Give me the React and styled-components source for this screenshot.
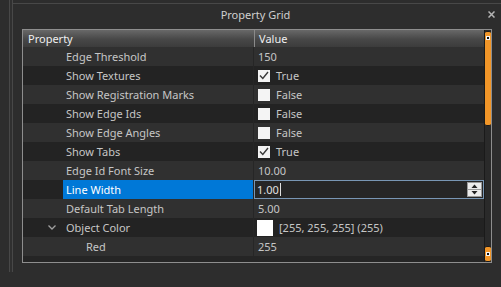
import React from 'react';
import styled, {createGlobalStyle} from 'styled-components';

const Global = createGlobalStyle`
    body {
        margin: 0;
        background: #2d2d2d;
        font-family: "Noto Sans", "Open Sans", sans-serif;
    }
`;

const Page = styled.div`
    width: 501px;
    height: 287px;
    display: flex;
    background: #2d2d2d;
    overflow: hidden;
`;

const Rail = styled.div`
    margin-left: 9px;
    width: 2px;
    height: 272px;
    border-left: 1px solid #484848;
    border-right: 1px solid #484848;
    background: #303030;
`;

const Main = styled.div`
    flex: 1;
    margin-top: 3px;
    border-top: 1px solid #484848;
    display: flex;
    flex-direction: column;
`;

const TitleBar = styled.div`
    height: 20px;
    display: grid;
    grid-template-columns: 1fr auto 1fr;
    align-items: center;
    font-size: 11px;
    color: #cfcfcf;
`;

const Title = styled.span`
    grid-column: 2;
    margin-right: 3px;
`;

const Close = styled.div`
    justify-self: end;
    margin-right: 6px;
    display: flex;
`;

const Grid = styled.div`
    margin: 5px 0 0 9px;
    width: 470px;
    height: 234px;
    box-sizing: border-box;
    border: 1px solid #8e8e8e;
    display: grid;
    grid-template-columns: 461px 7px;
    background: #252525;
`;

const Table = styled.div`
    display: flex;
    flex-direction: column;
    font-size: 11px;
`;

const Header = styled.div`
    height: 17px;
    display: grid;
    grid-template-columns: 231px 230px;
    background: linear-gradient(#686868, #474747 55%, #3c3c3c);
    color: #f0f0f0;
`;

const HeadCell = styled.div`
    display: flex;
    align-items: center;
    padding-left: ${p => p.$pad}px;
    border-left: ${p => p.$divider ? '1px solid #8a8a8a' : 'none'};
`;

const Row = styled.div`
    height: 19px;
    display: grid;
    grid-template-columns: 40px 191px 230px;
    background: ${p => p.$odd ? '#232323' : '#303030'};
    color: #c6c6c6;
`;

const Gutter = styled.div`
    display: flex;
    align-items: center;
    justify-content: flex-end;
    padding-right: 7px;
`;

const NameCell = styled.div`
    display: flex;
    align-items: center;
    padding-left: ${p => 3 + p.$level * 20}px;
    background: ${p => p.$selected ? '#0078d7' : 'transparent'};
    color: ${p => p.$selected ? '#ffffff' : 'inherit'};
    border-right: 1px solid #262626;
    white-space: nowrap;
`;

const ValueCell = styled.div`
    display: flex;
    align-items: center;
    gap: 6px;
    padding-left: 4px;
`;

const CheckBox = styled.div`
    width: 12px;
    height: 12px;
    background: #f4f4f4;
    display: flex;
    align-items: center;
    justify-content: center;
`;

const Swatch = styled.div`
    width: 16px;
    height: 16px;
    margin-left: -1px;
    background: #ffffff;
`;

const Editor = styled.div`
    display: flex;
    align-items: center;
    box-sizing: border-box;
    height: 19px;
    border: 1px solid #7896b4;
    background: #262626;
    padding-left: 2px;
    color: #e0e0e0;
`;

const Caret = styled.span`
    width: 1px;
    height: 13px;
    background: #e0e0e0;
    margin-left: 1px;
`;

const Spin = styled.div`
    margin-left: auto;
    margin-right: 1px;
    width: 15px;
    height: 15px;
    background: #ececec;
    border: 1px solid #9a9a9a;
    box-sizing: border-box;
    display: flex;
    flex-direction: column;
`;

const SpinHalf = styled.div`
    flex: 1;
    display: flex;
    align-items: center;
    justify-content: center;
    border-top: ${p => p.$split ? '1px solid #9a9a9a' : 'none'};
`;

const Scroll = styled.div`
    box-sizing: border-box;
    border-left: 1px solid #1a1a1a;
    background-color: #2a2a2a;
    display: grid;
    grid-template-rows: 95px 1fr 16px;
    padding-top: 1px;
`;

const Thumb = styled.div`
    grid-row: ${p => p.$row};
    background-color: #f29628;
    border-top: 1px solid #1a1a1a;
    border-bottom: 1px solid #1a1a1a;
    border-radius: 2px;
    display: flex;
    justify-content: center;
    align-items: flex-start;
    padding-top: ${p => p.$dot}px;
`;

const Dot = styled.div`
    width: 2px;
    height: 2px;
    background-color: #111;
    box-shadow: 0 0 0 1px #f6f6f6;
`;

const Check = () => (
    <svg width="10" height="9" viewBox="0 0 10 9">
        <polyline points="1,4.5 3.8,7.5 9,1" fill="none" stroke="#3a3a3a" strokeWidth="1.4"/>
    </svg>
);

const Chevron = () => (
    <svg width="8" height="5" viewBox="0 0 8 5">
        <polyline points="0.5,0.5 4,4 7.5,0.5" fill="none" stroke="#a0a0a0" strokeWidth="1.3"/>
    </svg>
);

const Arrow = ({up}) => (
    <svg width="7" height="4" viewBox="0 0 7 4">
        <polygon points={up ? '0.5,4 3.5,0.5 6.5,4' : '0.5,0 3.5,3.5 6.5,0'} fill="#222"/>
    </svg>
);

const rows = [
    {name: 'Edge Threshold', value: '150'},
    {name: 'Show Textures', check: true, value: 'True'},
    {name: 'Show Registration Marks', check: false, value: 'False'},
    {name: 'Show Edge Ids', check: false, value: 'False'},
    {name: 'Show Edge Angles', check: false, value: 'False'},
    {name: 'Show Tabs', check: true, value: 'True'},
    {name: 'Edge Id Font Size', value: '10.00'},
    {name: 'Line Width', value: '1.00', editing: true},
    {name: 'Default Tab Length', value: '5.00'},
    {name: 'Object Color', swatch: true, expanded: true, value: '[255, 255, 255] (255)'},
    {name: 'Red', value: '255', level: 1},
];

function Value({row}) {
    if (row.editing) {
        return (
            <Editor>
                {row.value}<Caret/>
                <Spin>
                    <SpinHalf><Arrow up/></SpinHalf>
                    <SpinHalf $split><Arrow/></SpinHalf>
                </Spin>
            </Editor>
        );
    }
    return (
        <ValueCell>
            {row.check !== undefined && <CheckBox>{row.check && <Check/>}</CheckBox>}
            {row.swatch && <Swatch/>}
            {row.value}
        </ValueCell>
    );
}

export default function App() {
    return (
        <Page>
            <Global/>
            <Rail/>
            <Main>
                <TitleBar>
                    <Title>Property Grid</Title>
                    <Close>
                        <svg width="7" height="7" viewBox="0 0 7 7">
                            <path d="M0.5 0.5 L6.5 6.5 M6.5 0.5 L0.5 6.5" stroke="#b4b4b4" strokeWidth="1.5"/>
                        </svg>
                    </Close>
                </TitleBar>
                <Grid>
                    <Table>
                        <Header>
                            <HeadCell $pad={5}>Property</HeadCell>
                            <HeadCell $pad={4} $divider>Value</HeadCell>
                        </Header>
                        {rows.map((row, i) => (
                            <Row key={row.name} $odd={i % 2 === 1}>
                                <Gutter>{row.expanded && <Chevron/>}</Gutter>
                                <NameCell $level={row.level || 0} $selected={row.editing}>{row.name}</NameCell>
                                <Value row={row}/>
                            </Row>
                        ))}
                    </Table>
                    <Scroll>
                        <Thumb $row={1} $dot={5}><Dot/></Thumb>
                        <Thumb $row={3} $dot={6}><Dot/></Thumb>
                    </Scroll>
                </Grid>
            </Main>
        </Page>
    );
}
